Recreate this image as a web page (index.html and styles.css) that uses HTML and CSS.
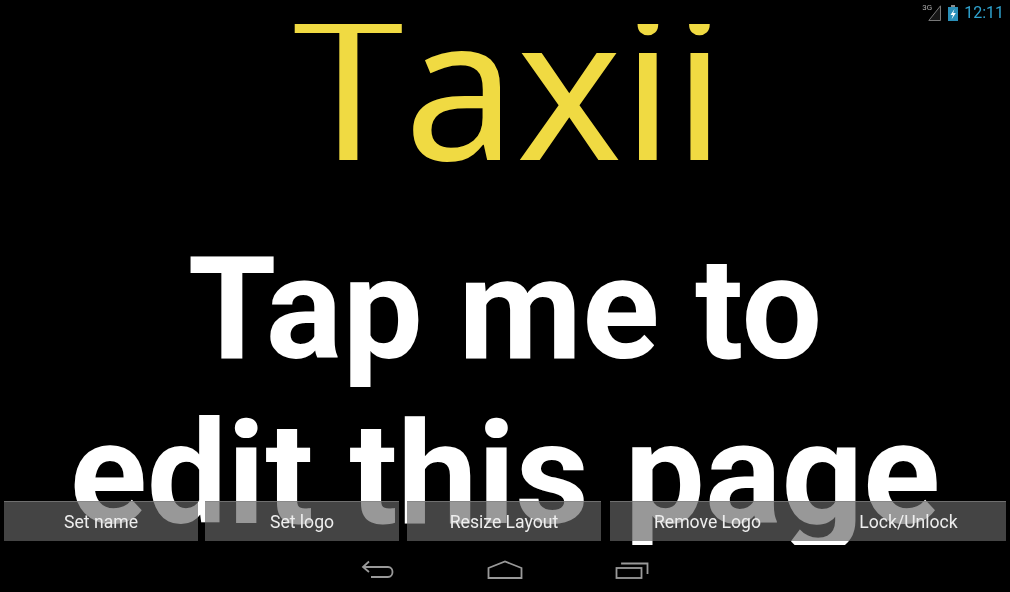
FILE: index.html
```html
<!DOCTYPE html>
<html lang="en">
<head>
<meta charset="utf-8">
<title>Taxii</title>
<link rel="stylesheet" href="styles.css">
</head>
<body>
<div class="screen">
  <div class="status">
    <span class="net">3G</span>
    <svg class="signal" width="13" height="16" viewBox="0 0 13 16"><path d="M12.5 .8V15.5H.8Z" fill="#161616" stroke="#777" stroke-width="1"/></svg>
    <svg class="battery" width="10" height="16" viewBox="0 0 10 16"><rect x="3" y="0" width="4" height="2" fill="#8a8a8a"/><rect x="0" y="2" width="10" height="14" fill="#2a8fb8"/><path d="M6.5 4 2.5 10H5L3.5 14.5 7.8 8H5.2Z" fill="#fff"/></svg>
    <span class="clock">12:11</span>
  </div>
  <main class="content">
    <h1 class="name">Taxii</h1>
    <p class="message">Tap me to<br>edit this page</p>
  </main>
  <div class="actions">
    <button class="action">Set name</button>
    <button class="action">Set logo</button>
    <button class="action action-third">Resize Layout</button>
    <div class="action-pair">
      <button class="action action-left">Remove Logo</button>
      <button class="action">Lock/Unlock</button>
    </div>
  </div>
  <nav class="navbar">
    <svg width="34" height="20" viewBox="0 0 34 20" fill="none" stroke="#999" stroke-width="1.8"><path d="M8 1.5 2 7l6 5M2 7h25c6 0 6 10 0 10H10"/></svg>
    <svg width="36" height="20" viewBox="0 0 36 20" fill="none" stroke="#999" stroke-width="1.8"><path d="M1.5 8 18 1.5 34.5 8V18H1.5Z"/></svg>
    <svg width="34" height="20" viewBox="0 0 34 20" fill="none" stroke="#999" stroke-width="1.8"><rect x="1.5" y="8" width="25" height="10"/><path d="M7 4.5V3.5H32.5V14"/></svg>
  </nav>
</div>
</body>
</html>
```
FILE: styles.css
```css
* { box-sizing: border-box; }
html, body { margin: 0; height: 100%; background: #000; }
.screen {
  position: relative;
  width: 1010px;
  height: 592px;
  padding-top: 24px;
  overflow: hidden;
  background: #000;
  font-family: Roboto, sans-serif;
  filter: blur(.35px);
}
.status {
  position: absolute;
  top: 0;
  right: 0;
  height: 24px;
  padding: 4px 6px 0 0;
  display: flex;
  align-items: flex-start;
  color: #aaa;
}
.net { font-size: 8px; line-height: 8px; margin-right: -4px; }
.signal { margin-right: 7px; margin-top: 1px; }
.battery { margin-right: 6px; margin-top: 1px; }
.clock { font-size: 16px; line-height: 18px; color: #2fa3cf; }
.content {
  height: 521px;
  overflow: hidden;
  text-align: center;
}
.name {
  margin: 0;
  height: 203px;
  padding-left: 8px;
  overflow: hidden;
  font-family: "Noto Sans", sans-serif;
  font-kerning: none;
  font-weight: 400;
  font-size: 200px;
  line-height: 117px;
  color: #f0da42;
}
.message {
  margin: 0;
  font-weight: 700;
  font-size: 143px;
  line-height: 165px;
  color: #fff;
}
.actions {
  position: absolute;
  left: 4px;
  top: 501px;
  width: 1002px;
  height: 40px;
  display: flex;
  gap: 7px;
}
.action {
  flex: 0 0 194px;
  height: 40px;
  padding: 0;
  border: 0;
  border-top: 1px solid rgba(130,130,130,.7);
  background: rgba(102,102,102,.67);
  color: #eee;
  font-family: Roboto, sans-serif;
  font-size: 17.6px;
}
.action-third { margin-left: 1px; }
.action-pair { flex: 1; display: flex; margin-left: 2px; }
.action-pair .action { flex: 1; }
.action-pair .action-left { padding-right: 6px; }
.navbar {
  position: absolute;
  left: 361px;
  top: 560px;
  display: flex;
  gap: 92px;
}
```
